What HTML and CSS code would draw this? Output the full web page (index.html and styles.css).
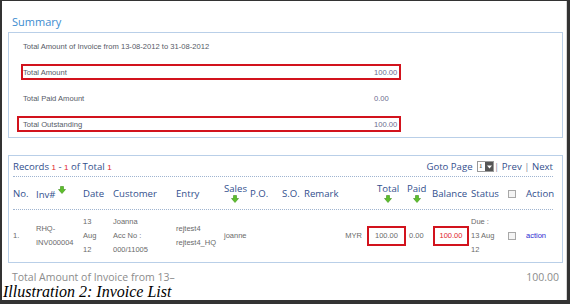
FILE: index.html
```html
<!DOCTYPE html>
<html>
<head>
<meta charset="utf-8">
<link rel="stylesheet" href="styles.css">
</head>
<body>
<div class="frame">
  <div class="page">
    <h2 class="title">Summary</h2>
    <div class="sumbox">
      <div class="srow"><span class="slabel">Total Amount of Invoice from 13-08-2012 to 31-08-2012</span></div>
      <div class="srow hl"><span class="slabel">Total Amount</span><span class="val">100.00</span></div>
      <div class="srow"><span class="slabel">Total Paid Amount</span><span class="val">0.00</span></div>
      <div class="srow hl wide"><span class="slabel">Total Outstanding</span><span class="val">100.00</span></div>
    </div>

    <div class="listbox">
      <div class="records">
        <div>Records <span class="n">1</span> - <span class="n">1</span> of Total <span class="n">1</span></div>
        <div class="pager">Goto Page <span class="sel"><span class="selv">1</span><span class="selb"><svg width="7" height="7" viewBox="0 0 7 7"><path d="M1 2.5h5l-2.5 3z" fill="#fff"/></svg></span></span> <span class="sep">|</span> Prev <span class="sep">|</span> Next</div>
      </div>
      <div class="grid head">
        <div>No.</div>
        <div>Inv#<svg class="arr up" width="8" height="8" viewBox="0 0 8 8"><path d="M2.5 0.5h3v3h2l-3.5 4-3.5-4h2z" fill="#5cbf2a" stroke="#3d8f1a" stroke-width="0.6"/></svg></div>
        <div>Date</div>
        <div>Customer</div>
        <div>Entry</div>
        <div class="stack">Sales<svg class="arr" width="8" height="8" viewBox="0 0 8 8"><path d="M2.5 0.5h3v3h2l-3.5 4-3.5-4h2z" fill="#5cbf2a" stroke="#3d8f1a" stroke-width="0.6"/></svg></div>
        <div>P.O.</div>
        <div>S.O.</div>
        <div>Remark</div>
        <div class="stack tot">Total<svg class="arr" width="8" height="8" viewBox="0 0 8 8"><path d="M2.5 0.5h3v3h2l-3.5 4-3.5-4h2z" fill="#5cbf2a" stroke="#3d8f1a" stroke-width="0.6"/></svg></div>
        <div class="stack">Paid<svg class="arr" width="8" height="8" viewBox="0 0 8 8"><path d="M2.5 0.5h3v3h2l-3.5 4-3.5-4h2z" fill="#5cbf2a" stroke="#3d8f1a" stroke-width="0.6"/></svg></div>
        <div>Balance</div>
        <div>Status</div>
        <div><span class="cb"></span></div>
        <div>Action</div>
      </div>
      <div class="grid data">
        <div>1.</div>
        <div>RHQ-<br>INV000004</div>
        <div>13<br>Aug<br>12</div>
        <div>Joanna<br>Acc No :<br>000/11005</div>
        <div>rejtest4<br>rejtest4_HQ</div>
        <div>joanne</div>
        <div></div>
        <div></div>
        <div class="cur">MYR</div>
        <div><span class="rbox">100.00</span></div>
        <div class="paid">0.00</div>
        <div><span class="rbox red">100.00</span></div>
        <div>Due :<br>13 Aug<br>12</div>
        <div><span class="cb"></span></div>
        <div class="act">action</div>
      </div>
    </div>

    <div class="foot"><span>Total Amount of Invoice from 13–</span><span>100.00</span></div>
    <div class="caption">Illustration 2: Invoice List</div>
  </div>
</div>
</body>
</html>
```
FILE: styles.css
```css
html, body {
  margin: 0;
  padding: 0;
}
body {
  background: #333333;
  width: 570px;
  height: 304px;
  overflow: hidden;
}
.frame {
  padding: 1px 4px 4px 2px;
}
.page {
  height: 299px;
  background: #ffffff;
  overflow: hidden;
  padding: 0 3px 0 6px;
  box-sizing: content-box;
  width: 555px;
  border-right: 1px solid #d6d6d6;
}
.title {
  margin: 14px 0 3px 4px;
  font: normal 11px/14px "Open Sans", sans-serif;
  color: #3b8ccf;
}
.sumbox {
  border: 1px solid #b9cfe8;
  padding: 5px 0;
  display: flex;
  flex-direction: column;
  gap: 10px;
  font-family: "Liberation Sans", Arial, sans-serif;
  font-size: 7.6px;
  color: #555a66;
}
.srow {
  width: 380px;
  height: 16px;
  box-sizing: border-box;
  border: 2px solid transparent;
  margin-left: 12px;
  display: grid;
  grid-template-columns: 351px 1fr;
  align-items: center;
  white-space: nowrap;
}
.srow.hl {
  border-color: #d2131d;
}
.srow.wide {
  width: 384px;
  margin-left: 8px;
  padding-left: 4px;
}
.val {
  color: #6b6b8e;
}
.listbox {
  margin-top: 17px;
  border: 1px solid #b9cfe8;
  padding: 0 9px 0 4px;
  height: 106px;
  font-family: "Open Sans", sans-serif;
  font-size: 9.6px;
  color: #33508e;
}
.records {
  height: 20px;
  display: flex;
  justify-content: space-between;
  align-items: center;
  border-bottom: 1px dotted #9fb4d0;
}
.n {
  color: #e0252b;
  font-family: "Liberation Sans", Arial, sans-serif;
  font-size: 8px;
}
.pager {
  display: flex;
  align-items: center;
  white-space: pre;
}
.sep {
  color: #8a8a9a;
}
.sel {
  display: inline-flex;
  width: 17px;
  height: 11px;
  border: 1px solid #9a9a9a;
  box-sizing: border-box;
  margin-left: 2px;
  align-items: stretch;
  background: #fff;
}
.selv {
  flex: 1;
  font: 7px/9px "Liberation Serif", serif;
  color: #222;
  padding-left: 1px;
}
.selb {
  width: 8px;
  background: #555;
  display: flex;
  align-items: center;
  justify-content: center;
}
.grid {
  display: grid;
  grid-template-columns: 23px 47px 30px 63px 48px 26px 32px 22px 63px 40px 25px 39px 37px 18px 26px;
  align-items: center;
}
.head {
  height: 32px;
  border-bottom: 1px dotted #9fb4d0;
  white-space: nowrap;
}
.stack {
  display: flex;
  flex-direction: column;
  align-items: center;
  justify-self: start;
  line-height: 12px;
}
.tot {
  margin-left: 10px;
}
.arr.up {
  vertical-align: 4px;
  margin-left: 2px;
}
.cb {
  display: inline-block;
  width: 6px;
  height: 6px;
  border: 1px solid #a8a8a8;
  background: #f4f4f4;
  vertical-align: middle;
}
.data {
  height: 52px;
  font-family: "Liberation Sans", Arial, sans-serif;
  font-size: 7.5px;
  line-height: 14px;
  color: #6a6a6a;
  white-space: nowrap;
}
.cur {
  text-align: right;
  padding-right: 5px;
}
.rbox {
  display: inline-block;
  box-sizing: border-box;
  height: 20px;
  line-height: 16px;
  border: 2px solid #d2131d;
  width: 39px;
  text-align: center;
}
.rbox.red {
  color: #e0252b;
  width: 36px;
  margin-left: 1px;
}
.paid {
  padding-left: 2px;
}
.act {
  color: #2a2ad0;
}
.foot {
  margin-top: 7px;
  height: 14px;
  display: flex;
  justify-content: space-between;
  align-items: center;
  padding: 0 4px;
  font-family: "Open Sans", sans-serif;
  font-size: 10.5px;
  color: #8c8c8c;
}
.caption {
  margin-left: -5px;
  font: italic 16px/16px "Liberation Serif", serif;
  color: #000;
}
```
